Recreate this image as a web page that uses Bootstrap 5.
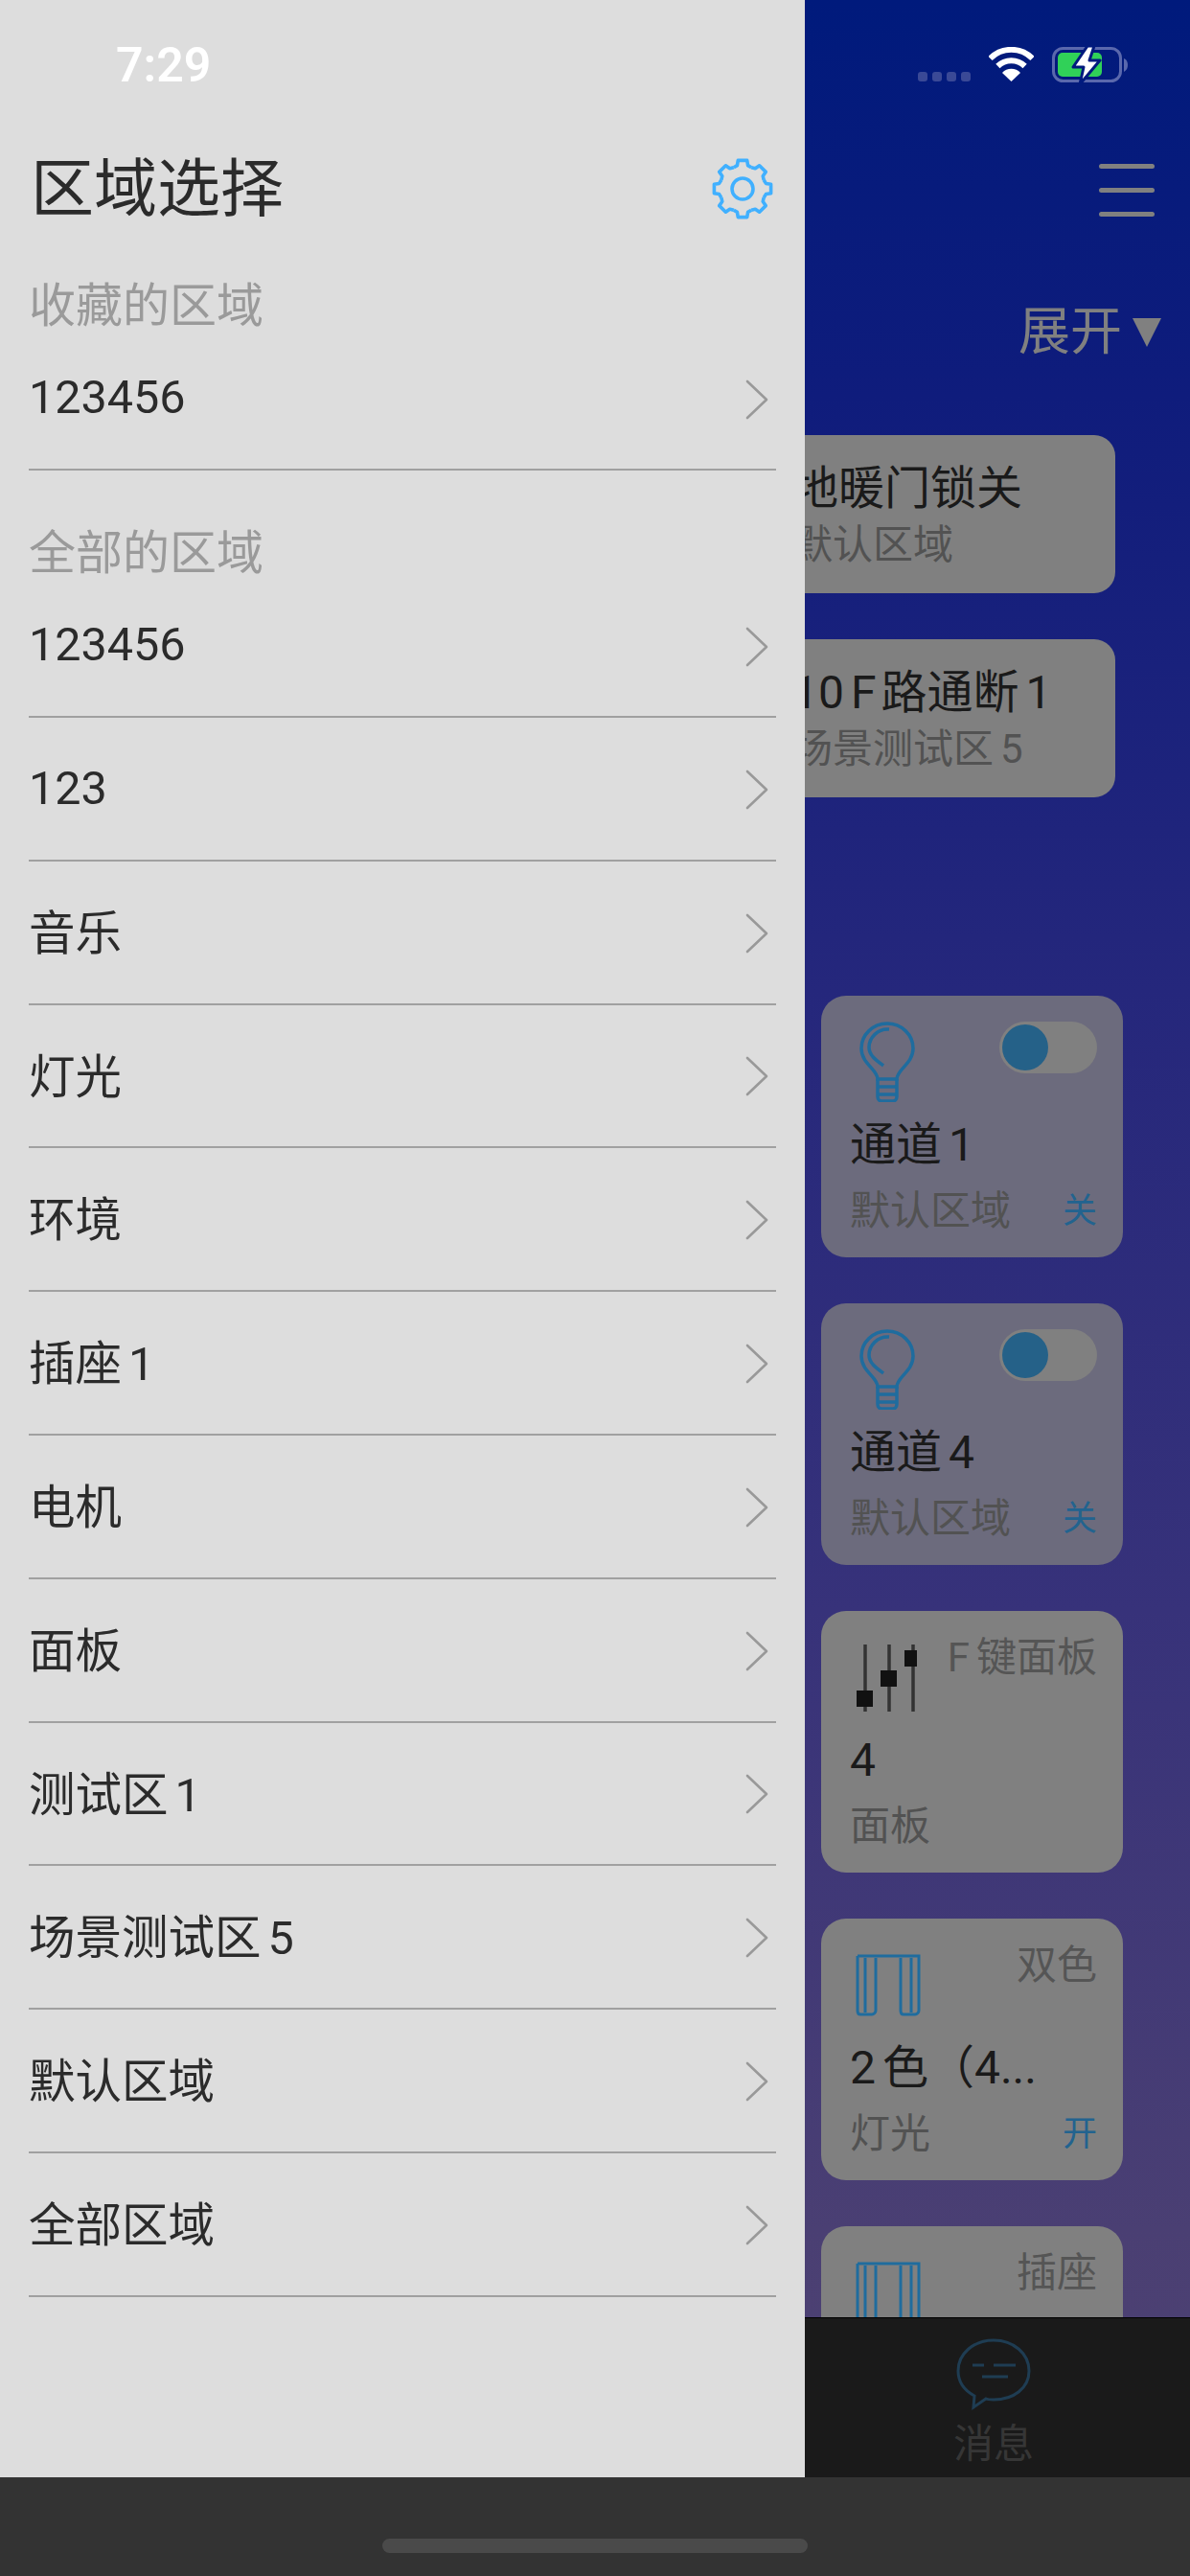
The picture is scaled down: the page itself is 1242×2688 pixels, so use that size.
<!DOCTYPE html>
<html lang="zh-CN">
<head>
    <meta charset="UTF-8">
    <meta name="viewport" content="width=device-width, initial-scale=1.0">
    <title>区域选择</title>
    <link rel="stylesheet" href="https://cdn.jsdelivr.net/npm/bootstrap@5.3.0/dist/css/bootstrap.min.css">
    <style>
        html, body {
            width: 1242px;
            height: 2688px;
            overflow: hidden;
        }

        body {
            font-family: "Roboto", "Noto Sans CJK SC", sans-serif;
            background-color: #333;
            position: relative;
        }

        .app-main {
            height: 2585px;
        }

        .digit-gap {
            display: inline-block;
            width: 7px;
        }

        .digit-gap.tight {
            width: 5px;
        }

        /* status bar lies over both the drawer and the page */
        .status-bar {
            position: absolute;
            top: 0;
            left: 0;
            width: 1242px;
            height: 100px;
        }

        .status-time {
            position: absolute;
            left: 121px;
            top: 38px;
            font-size: 50px;
            line-height: 60px;
            font-weight: 600;
            color: #fff;
        }

        .status-dots {
            position: absolute;
            left: 958px;
            top: 75px;
            gap: 5px;
        }

        .status-dots i {
            display: block;
            width: 10px;
            height: 10px;
            border-radius: 3px;
            background-color: #3a4996;
        }

        .status-wifi {
            position: absolute;
            left: 1032px;
            top: 49px;
        }

        .status-battery {
            position: absolute;
            left: 1098px;
            top: 48px;
        }

        /* drawer */
        .drawer {
            width: 840px;
            flex: 0 0 840px;
            background-color: #ddd;
            padding: 0 30px;
        }

        .drawer-head {
            height: 233px;
            padding-top: 165px;
            padding-right: 2px;
            padding-left: 2px;
        }

        .drawer-title {
            font-size: 66px;
            line-height: 66px;
            color: #2b2b2b;
        }

        .drawer-gear {
            margin-top: -1px;
        }

        .section-label {
            font-size: 49px;
            line-height: 60px;
            color: #9a9a9a;
            height: 60px;
            margin-top: 57px;
        }

        .area-list .list-group-item {
            background: transparent;
            height: 149.8px;
            padding: 0 10px 0 0;
            font-size: 48.5px;
            color: #2b2b2b;
            border-color: #a0a0a0;
            border-width: 0 0 2px;
        }

        .area-list .list-group-item:first-child {
            height: 141px;
            padding-bottom: 8px;
        }

        .area-list .list-group-item:last-child {
            border-bottom-width: 2px;
        }

        .area-list .cjk-row {
            padding-top: 5px;
        }

        .area-list .area-chevron {
            margin-top: 2px;
            margin-right: -3px;
        }

        /* page under the drawer */
        .page-pane {
            min-width: 0;
            overflow: hidden;
            background: linear-gradient(180deg, #001a7c 0%, #0f1c7c 16%, #25277c 40%, #37327a 65%, #4a3f73 90%, #4e4272 100%);
        }

        .page-scroll {
            min-height: 0;
            overflow: hidden;
            padding-top: 171px;
        }

        .menu-icon {
            margin-left: 307px;
            gap: 20px;
            width: 58px;
            flex: 0 0 auto;
        }

        .menu-icon i {
            display: block;
            height: 5px;
            border-radius: 3px;
            background-color: #808080;
        }

        .expand-link {
            height: 60px;
            flex: 0 0 60px;
            margin-top: 91px;
            padding-right: 30px;
            color: #808080;
            font-size: 54px;
            line-height: 60px;
            gap: 11px;
        }

        .wide-tile {
            margin: 77px 78px 0 -40px;
            height: 165px;
            flex: 0 0 165px;
            padding: 27px 0 0 27px;
            background-color: #808080;
            border-radius: 22px;
            border: 0;
            white-space: nowrap;
        }

        .wide-tile + .wide-tile {
            margin-top: 48px;
        }

        .wide-tile .tile-area {
            margin-top: 5px;
        }

        .tile-name {
            font-size: 48px;
            line-height: 58px;
            color: #1a1a1a;
            white-space: nowrap;
        }

        .tile-area {
            font-size: 42px;
            line-height: 50px;
            color: #525252;
            white-space: nowrap;
        }

        .small-tile {
            margin: 48px 70px 0 17px;
            height: 273px;
            flex: 0 0 273px;
            padding: 27px 27px 0 30px;
            background-color: #808080;
            border-radius: 26px;
            border: 0;
        }

        .small-tile.first {
            margin-top: 207px;
        }

        .small-tile.tinted {
            background-color: #6c6b7d;
        }

        .tile-top {
            height: 84px;
            margin-bottom: 16px;
        }

        .tile-icon {
            margin-left: 9px;
        }

        .tile-tag {
            font-size: 42px;
            line-height: 50px;
            color: #555;
            margin-top: -3px;
        }

        .tile-state {
            font-size: 36px;
            line-height: 40px;
            color: #22638f;
        }

        .tile-bottom {
            margin-top: 15px;
        }

        .tile-toggle {
            width: 102px;
            height: 54px;
            border-radius: 27px;
            background-color: #808080;
            padding: 3px;
        }

        .tile-toggle i {
            display: block;
            width: 48px;
            height: 48px;
            border-radius: 50%;
            background-color: #256188;
        }

        .tab-strip {
            height: 167px;
            flex: 0 0 167px;
            background-color: #1a1a1a;
            border-top: 1px solid #000;
            padding-top: 21px;
            padding-right: 8px;
        }

        .tab-label {
            font-size: 42px;
            line-height: 50px;
            margin-top: 8px;
            color: #363636;
        }

        .home-bar {
            height: 103px;
            background-color: #333;
        }

        .home-indicator {
            width: 444px;
            height: 15px;
            border-radius: 8px;
            background-color: #4a4a4a;
            margin-top: 64px;
        }
    </style>
</head>

<body>
    <div class="app-main d-flex">
        <div class="drawer">
            <div class="drawer-head d-flex justify-content-between align-items-start">
                <div class="drawer-title">区域选择</div>
                <svg class="drawer-gear" width="66" height="66" viewBox="-33 -33 66 66" fill="none" stroke="#40b0ff" stroke-width="3.6" stroke-linejoin="round">
                    <defs>
                        <path id="gear-tooth" d="M-9.18-22.17L-5.6-24.4L-4.7-29.6L4.7-29.6L5.6-24.4L9.18-22.17"/>
                    </defs>
                    <use href="#gear-tooth"/>
                    <use href="#gear-tooth" transform="rotate(45)"/>
                    <use href="#gear-tooth" transform="rotate(90)"/>
                    <use href="#gear-tooth" transform="rotate(135)"/>
                    <use href="#gear-tooth" transform="rotate(180)"/>
                    <use href="#gear-tooth" transform="rotate(225)"/>
                    <use href="#gear-tooth" transform="rotate(270)"/>
                    <use href="#gear-tooth" transform="rotate(315)"/>
                    <circle r="11"/>
                </svg>
            </div>

            <div class="section-label">收藏的区域</div>
            <div class="list-group list-group-flush area-list" id="fav-list"></div>

            <div class="section-label">全部的区域</div>
            <div class="list-group list-group-flush area-list" id="all-list"></div>
        </div>

        <div class="page-pane flex-grow-1 d-flex flex-column">
            <div class="page-scroll flex-grow-1 d-flex flex-column">
                <div class="menu-icon d-flex flex-column"><i></i><i></i><i></i></div>
                <div class="expand-link d-flex justify-content-end align-items-center">
                    <span>展开</span>
                    <svg width="30" height="30" viewBox="0 0 30 30"><path d="M0 0H30L15 30Z" fill="#808080"/></svg>
                </div>

                <div class="card wide-tile">
                    <div class="tile-name">地暖门锁关</div>
                    <div class="tile-area">默认区域</div>
                </div>
                <div class="card wide-tile">
                    <div class="tile-name">10<span class="digit-gap"></span>F<span class="digit-gap tight"></span>路通断<span class="digit-gap"></span>1</div>
                    <div class="tile-area">场景测试区<span class="digit-gap"></span>5</div>
                </div>

                <div class="card small-tile tinted first">
                    <div class="tile-top d-flex justify-content-between align-items-start">
                        <svg class="tile-icon" width="60" height="84" viewBox="0 0 60 84" fill="none" stroke="#1f6c9e" stroke-width="3.5"><use href="#bulb-shape"/></svg>
                        <div class="tile-toggle"><i></i></div>
                    </div>
                    <div class="tile-name">通道<span class="digit-gap"></span>1</div>
                    <div class="tile-bottom d-flex justify-content-between align-items-center">
                        <div class="tile-area">默认区域</div>
                        <div class="tile-state">关</div>
                    </div>
                </div>

                <div class="card small-tile tinted">
                    <div class="tile-top d-flex justify-content-between align-items-start">
                        <svg class="tile-icon" width="60" height="84" viewBox="0 0 60 84" fill="none" stroke="#1f6c9e" stroke-width="3.5"><use href="#bulb-shape"/></svg>
                        <div class="tile-toggle"><i></i></div>
                    </div>
                    <div class="tile-name">通道<span class="digit-gap"></span>4</div>
                    <div class="tile-bottom d-flex justify-content-between align-items-center">
                        <div class="tile-area">默认区域</div>
                        <div class="tile-state">关</div>
                    </div>
                </div>

                <div class="card small-tile">
                    <div class="tile-top d-flex justify-content-between align-items-start">
                        <svg width="70" height="84" viewBox="0 0 70 84">
                            <path d="M16 8V78M41 8V78M66 8V78" stroke="#333" stroke-width="3.5"/>
                            <path d="M7 56h17v17h-17zM32 35h17v17h-17zM57 14h17v17h-17z" fill="#111"/>
                        </svg>
                        <div class="tile-tag">F<span class="digit-gap"></span>键面板</div>
                    </div>
                    <div class="tile-name">4</div>
                    <div class="tile-bottom d-flex justify-content-between align-items-center">
                        <div class="tile-area">面板</div>
                    </div>
                </div>

                <div class="card small-tile">
                    <div class="tile-top d-flex justify-content-between align-items-start">
                        <svg width="74" height="84" viewBox="0 0 74 84" fill="none" stroke="#1f6c9e" stroke-width="3"><use href="#curtain-shape"/></svg>
                        <div class="tile-tag">双色</div>
                    </div>
                    <div class="tile-name">2<span class="digit-gap"></span>色（4...</div>
                    <div class="tile-bottom d-flex justify-content-between align-items-center">
                        <div class="tile-area">灯光</div>
                        <div class="tile-state">开</div>
                    </div>
                </div>

                <div class="card small-tile">
                    <div class="tile-top d-flex justify-content-between align-items-start">
                        <svg width="74" height="84" viewBox="0 0 74 84" fill="none" stroke="#1f6c9e" stroke-width="3"><use href="#curtain-shape"/></svg>
                        <div class="tile-tag">插座</div>
                    </div>
                </div>
            </div>

            <div class="tab-strip d-flex flex-column align-items-center">
                <svg width="78" height="78" viewBox="0 0 78 78" fill="none" stroke="#1f3d53" stroke-width="3">
                    <path d="M19 60C8 54 2 45 2 34C2 16 18 2 39 2C60 2 76 16 76 34C76 52 60 64 39 64C36 64 33 64 31 63L18 72Z"/>
                    <path d="M17 28H29M39 28H62M27 40H54"/>
                </svg>
                <div class="tab-label">消息</div>
            </div>
        </div>
    </div>

    <div class="home-bar d-flex justify-content-center">
        <div class="home-indicator"></div>
    </div>

    <div class="status-bar">
        <div class="status-time">7:29</div>
        <div class="status-dots d-flex"><i></i><i></i><i></i><i></i></div>
        <svg class="status-wifi" width="47" height="37" viewBox="0 0 47 37" fill="none" stroke="#fff" stroke-width="6">
            <path d="M1.5 12A31 31 0 0 1 45.5 12"/>
            <path d="M9.4 20A20 20 0 0 1 37.6 20"/>
            <path d="M23.5 36L14 27A13 13 0 0 1 33 27Z" fill="#fff" stroke="none"/>
        </svg>
        <svg class="status-battery" width="80" height="40" viewBox="0 0 80 40" fill="none">
            <rect x="1.5" y="2.5" width="70" height="34" rx="10" stroke="#5a68ad" stroke-width="3"/>
            <path d="M75 13C78 14 79 17 79 20C79 23 78 25 75 27Z" fill="#5a68ad"/>
            <rect x="6" y="7" width="46" height="25" rx="5" fill="#30d158"/>
            <path d="M37 0L22 22H33L29 40L50 15H39L44 0Z" fill="#fff" stroke="#011a7e" stroke-width="3" stroke-linejoin="round"/>
        </svg>
    </div>

    <svg width="0" height="0" class="position-absolute">
        <defs>
            <g id="bulb-shape">
                <path d="M20 60C20 50 3 44 3 28A27 26 0 0 1 57 28C57 44 40 50 40 60Z"/>
                <path d="M32 8C20 7 11 17 11 27C11 35 18 40 26 46"/>
                <path d="M20 60V78C20 81 22 83 24 83H36C38 83 40 81 40 78V60M20 68H40M20 76H40"/>
            </g>
            <g id="curtain-shape" transform="translate(6 9)">
                <path d="M2 3H66V60C66 62 64 64 62 64H50C48 64 47 62 47 60V5M21 5V60C21 62 19 64 17 64H5C3 64 2 62 2 60V3M10 5V62M58 5V62"/>
            </g>
        </defs>
    </svg>

    <script>
        // list rows of the drawer
        const chevron = `<svg class="area-chevron" width="26" height="42" viewBox="0 0 26 42" fill="none" stroke="#999" stroke-width="2.6" stroke-linecap="round" stroke-linejoin="round"><path d="M3 2L23 21L3 40"/></svg>`;
        const gap = '<span class="digit-gap"></span>';

        function fillList(id, names) {
            const list = document.getElementById(id);
            names.forEach((name) => {
                // rows with chinese text sit a little lower than digit-only rows
                const rowClass = /^\d+$/.test(name) ? '' : 'cjk-row';
                list.innerHTML += `<div class="list-group-item d-flex justify-content-between align-items-center"><span class="${rowClass}">${name}</span>${chevron}</div>`;
            });
        }

        fillList('fav-list', ['123456']);
        fillList('all-list', ['123456', '123', '音乐', '灯光', '环境', `插座${gap}1`, '电机', '面板', `测试区${gap}1`, `场景测试区${gap}5`, '默认区域', '全部区域']);
    </script>
    <script src="https://cdn.jsdelivr.net/npm/bootstrap@5.3.0/dist/js/bootstrap.bundle.min.js"></script>
</body>

</html>
